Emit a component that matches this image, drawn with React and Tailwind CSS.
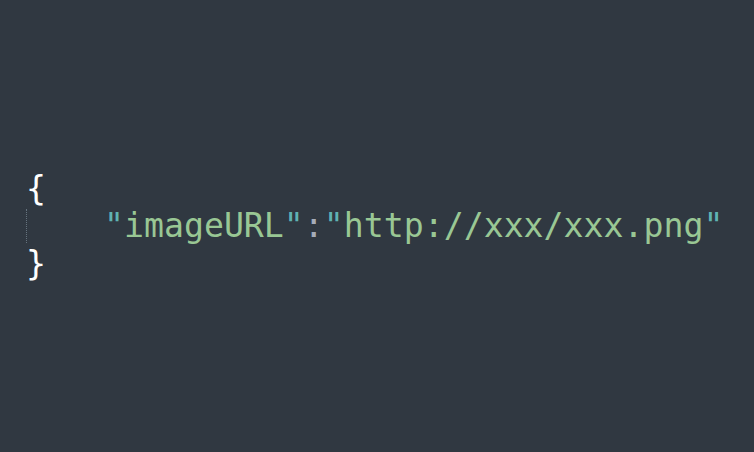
export default function App() {
  const mono = { fontFamily: '"DejaVu Sans Mono", "Liberation Mono", monospace' };
  return (
    <div className="w-[754px] h-[452px] bg-[#303841] flex flex-col justify-center pl-[26px]">
      <div className="text-[33.2px] leading-[37.5px] whitespace-pre" style={mono}>
        <div className="text-white">{"{"}</div>
        <div className="flex">
          <div className="border-l border-dotted border-[#65737e] my-[2px]" />
          <span className="ml-[77px]">
            <span className="text-[#5fb3b3]">"</span>
            <span className="text-[#99c794]">imageURL</span>
            <span className="text-[#5fb3b3]">"</span>
            <span className="text-[#a6acb9]">:</span>
            <span className="text-[#5fb3b3]">"</span>
            <span className="text-[#99c794]">http://xxx/xxx.png</span>
            <span className="text-[#5fb3b3]">"</span>
          </span>
        </div>
        <div className="text-white">{"}"}</div>
      </div>
    </div>
  );
}
